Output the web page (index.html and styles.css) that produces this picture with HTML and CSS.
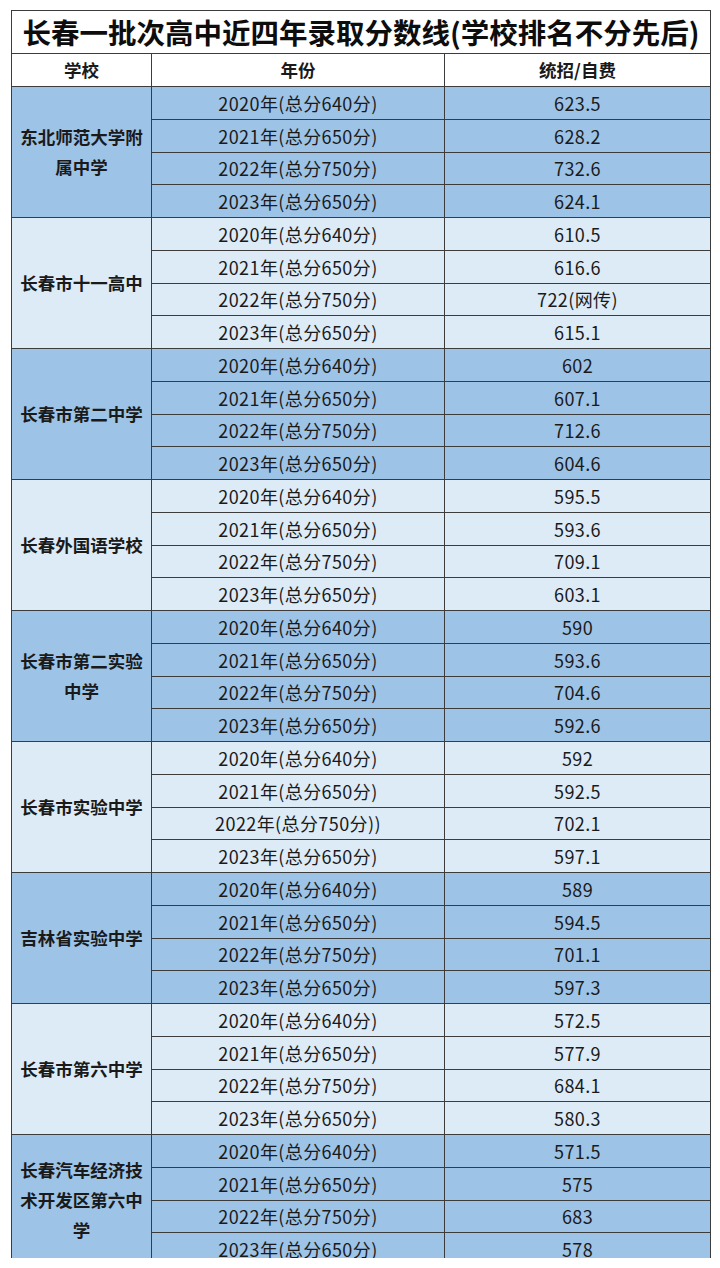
FILE: index.html
```html
<!DOCTYPE html>
<html lang="zh-CN">
<head>
<meta charset="utf-8">
<title>长春一批次高中近四年录取分数线</title>
<link rel="stylesheet" href="styles.css">
</head>
<body>
<div class="frame">
<table class="scores">
  <colgroup>
    <col class="c-school">
    <col class="c-year">
    <col class="c-score">
  </colgroup>
  <tr class="title-row"><td colspan="3" class="title">长春一批次高中近四年录取分数线(学校排名不分先后)</td></tr>
  <tr class="head-row"><th>学校</th><th>年份</th><th>统招/自费</th></tr>

  <tr class="dark"><td rowspan="4" class="school">东北师范大学附属中学</td><td>2020年(总分640分)</td><td>623.5</td></tr>
  <tr class="dark"><td>2021年(总分650分)</td><td>628.2</td></tr>
  <tr class="dark"><td>2022年(总分750分)</td><td>732.6</td></tr>
  <tr class="dark"><td>2023年(总分650分)</td><td>624.1</td></tr>

  <tr class="light"><td rowspan="4" class="school">长春市十一高中</td><td>2020年(总分640分)</td><td>610.5</td></tr>
  <tr class="light"><td>2021年(总分650分)</td><td>616.6</td></tr>
  <tr class="light"><td>2022年(总分750分)</td><td>722(网传)</td></tr>
  <tr class="light"><td>2023年(总分650分)</td><td>615.1</td></tr>

  <tr class="dark"><td rowspan="4" class="school">长春市第二中学</td><td>2020年(总分640分)</td><td>602</td></tr>
  <tr class="dark"><td>2021年(总分650分)</td><td>607.1</td></tr>
  <tr class="dark"><td>2022年(总分750分)</td><td>712.6</td></tr>
  <tr class="dark"><td>2023年(总分650分)</td><td>604.6</td></tr>

  <tr class="light"><td rowspan="4" class="school">长春外国语学校</td><td>2020年(总分640分)</td><td>595.5</td></tr>
  <tr class="light"><td>2021年(总分650分)</td><td>593.6</td></tr>
  <tr class="light"><td>2022年(总分750分)</td><td>709.1</td></tr>
  <tr class="light"><td>2023年(总分650分)</td><td>603.1</td></tr>

  <tr class="dark"><td rowspan="4" class="school">长春市第二实验中学</td><td>2020年(总分640分)</td><td>590</td></tr>
  <tr class="dark"><td>2021年(总分650分)</td><td>593.6</td></tr>
  <tr class="dark"><td>2022年(总分750分)</td><td>704.6</td></tr>
  <tr class="dark"><td>2023年(总分650分)</td><td>592.6</td></tr>

  <tr class="light"><td rowspan="4" class="school">长春市实验中学</td><td>2020年(总分640分)</td><td>592</td></tr>
  <tr class="light"><td>2021年(总分650分)</td><td>592.5</td></tr>
  <tr class="light"><td>2022年(总分750分))</td><td>702.1</td></tr>
  <tr class="light"><td>2023年(总分650分)</td><td>597.1</td></tr>

  <tr class="dark"><td rowspan="4" class="school">吉林省实验中学</td><td>2020年(总分640分)</td><td>589</td></tr>
  <tr class="dark"><td>2021年(总分650分)</td><td>594.5</td></tr>
  <tr class="dark"><td>2022年(总分750分)</td><td>701.1</td></tr>
  <tr class="dark"><td>2023年(总分650分)</td><td>597.3</td></tr>

  <tr class="light"><td rowspan="4" class="school">长春市第六中学</td><td>2020年(总分640分)</td><td>572.5</td></tr>
  <tr class="light"><td>2021年(总分650分)</td><td>577.9</td></tr>
  <tr class="light"><td>2022年(总分750分)</td><td>684.1</td></tr>
  <tr class="light"><td>2023年(总分650分)</td><td>580.3</td></tr>

  <tr class="dark"><td rowspan="4" class="school">长春汽车经济技术开发区第六中学</td><td>2020年(总分640分)</td><td>571.5</td></tr>
  <tr class="dark"><td>2021年(总分650分)</td><td>575</td></tr>
  <tr class="dark"><td>2022年(总分750分)</td><td>683</td></tr>
  <tr class="dark"><td>2023年(总分650分)</td><td>578</td></tr>
</table>
</div>
</body>
</html>
```
FILE: styles.css
```css
html, body {
  margin: 0;
  padding: 0;
  background: #ffffff;
}

.frame {
  margin: 10px 0 0 11px;
  width: 700px;
  height: 1248px;
  overflow: hidden;
}

.scores {
  border-collapse: collapse;
  table-layout: fixed;
  width: 699px;
  font-family: "Noto Sans CJK SC", "Noto Sans", sans-serif;
  color: #1a1a1a;
}

.c-school { width: 140px; }
.c-year { width: 293px; }
.c-score { width: 266px; }

.scores td,
.scores th {
  border: 1.5px solid #3c3c3c;
  padding: 0;
  text-align: center;
  vertical-align: middle;
  font-size: 18px;
  letter-spacing: 0.4px;
  line-height: 1;
  white-space: nowrap;
}

.title-row { height: 43px; }
.scores td.title {
  font-size: 28.5px;
  font-weight: 700;
  color: #0d0d0d;
  background: #ffffff;
  letter-spacing: 0;
  overflow: hidden;
}

.head-row { height: 33px; }
.scores .head-row th {
  background: #ffffff;
  font-weight: 700;
  font-size: 17.5px;
  letter-spacing: 0;
  color: #1a1a1a;
}

.scores tr.dark,
.scores tr.light { height: 32.75px; }

.dark td { background: #9dc3e6; }
.light td { background: #ddebf7; }

.scores td.school {
  white-space: normal;
  font-weight: 700;
  font-size: 17.5px;
  letter-spacing: 0;
  line-height: 30px;
  padding: 0 8px;
  word-break: break-all;
}
```
